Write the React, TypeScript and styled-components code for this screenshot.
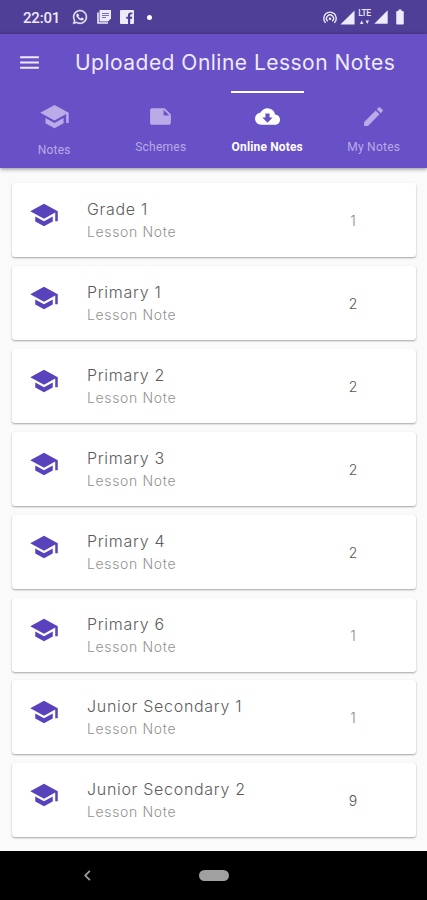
import React from 'react';
import styled, { createGlobalStyle } from 'styled-components';
import {
  MdSchool, MdNote, MdCloudDownload, MdEdit, MdMenu,
  MdSignalCellular4Bar, MdBatteryFull, MdChevronLeft,
} from 'react-icons/md';
import { FaWhatsapp } from 'react-icons/fa';

const GlobalStyle = createGlobalStyle`
  * { box-sizing: border-box; }
  body { margin: 0; background: #fafafa; }
`;

const Screen = styled.div`
  display: flex;
  flex-direction: column;
  width: 427px;
  height: 900px;
  overflow: hidden;
  background: #fafafa;
  font-family: Inter, 'Liberation Sans', sans-serif;
`;

const StatusBar = styled.div`
  flex: none;
  display: flex;
  align-items: center;
  justify-content: space-between;
  height: 34px;
  padding: 0 18px 0 23px;
  background: #4f3f97;
  color: #eeeafa;
`;

const StatusGroup = styled.div<{ $gap: number }>`
  display: flex;
  align-items: center;
  gap: ${(p) => p.$gap}px;
  svg { display: block; }
`;

const Clock = styled.span`
  width: 37px;
  margin: 2px 3px 0 0;
  font: 500 15px/18px Roboto, sans-serif;
  letter-spacing: -0.2px;
  white-space: nowrap;
`;

const Dot = styled.span`
  width: 5px;
  height: 5px;
  margin-left: 4px;
  border-radius: 50%;
  background: #fff;
`;

const Lte = styled.span`
  display: flex;
  flex-direction: column;
  align-items: center;
  width: 13px;
  height: 17px;
  gap: 2px;
  font: 500 8.5px/9px Roboto, sans-serif;
  letter-spacing: -0.4px;
`;

const Header = styled.header`
  flex: none;
  height: 134px;
  background: #6850c6;
  box-shadow: 0 1px 4px rgba(0, 0, 0, 0.45);
`;

const AppBar = styled.div`
  display: flex;
  align-items: center;
  height: 57px;
  padding-left: 17px;
  color: #eeeafb;
`;

const Title = styled.h1`
  margin: 0 0 0 33px;
  font-size: 21px;
  font-weight: 400;
  line-height: 26px;
  letter-spacing: 0.48px;
  white-space: nowrap;
`;

const Tabs = styled.nav`
  display: grid;
  grid-template-columns: repeat(4, 1fr);
  height: 77px;
  padding-left: 1px;
`;

const Tab = styled.div<{ $active?: boolean; $drop?: boolean }>`
  display: flex;
  flex-direction: column;
  align-items: center;
  justify-self: center;
  width: ${(p) => (p.$active ? '73px' : '80px')};
  padding-top: ${(p) => (p.$drop ? 8 : 11)}px;
  border-top: 2px solid ${(p) => (p.$active ? '#fff' : 'transparent')};
  color: ${(p) => (p.$active ? '#fff' : '#b9abe7')};
  svg { display: block; }
`;

const TabLabel = styled.span<{ $strong?: boolean; $gap: number }>`
  margin-top: ${(p) => p.$gap}px;
  font: ${(p) => (p.$strong ? 700 : 400)} 12px/14px Roboto, sans-serif;
  letter-spacing: ${(p) => (p.$strong ? '0.15px' : '0.25px')};
  white-space: nowrap;
`;

const List = styled.main`
  flex: none;
  display: flex;
  flex-direction: column;
  gap: 8.86px;
  height: 683px;
  padding: 15.3px 11px 0 12px;
`;

const Card = styled.article`
  flex: none;
  display: flex;
  height: 74px;
  padding-left: 17px;
  border-radius: 3px;
  background: #fff;
  box-shadow: 0 1px 2px rgba(0, 0, 0, 0.35);
`;

const CapIcon = styled(MdSchool)`
  flex: none;
  margin-top: 17px;
  color: #5a42bc;
`;

const CardText = styled.div`
  width: 253px;
  margin: 15px 0 0 28px;
  white-space: nowrap;
`;

const Name = styled.div`
  color: #5c5c5c;
  font-size: 16px;
  font-weight: 300;
  line-height: 22px;
  letter-spacing: 0.7px;
`;

const Sub = styled.div`
  color: #929292;
  font-size: 14px;
  font-weight: 300;
  line-height: 23px;
  letter-spacing: 0.65px;
`;

const Count = styled.span<{ $light: boolean }>`
  width: 26px;
  margin-top: 28px;
  color: ${(p) => (p.$light ? '#8a8a8a' : '#555')};
  font-size: 14px;
  font-weight: 300;
  line-height: 20px;
  text-align: center;
`;

const NavBar = styled.footer`
  flex: none;
  display: flex;
  align-items: center;
  height: 49px;
  padding-left: 77px;
  background: #000;
  color: #a0a0a0;
`;

const HomePill = styled.span`
  width: 30px;
  height: 11px;
  margin-left: 101px;
  border-radius: 6px;
  background: #a0a0a0;
`;

const ArticleIcon = () => (
  <svg width="14" height="14" viewBox="0 0 14 14">
    <path fill="none" stroke="currentColor" strokeWidth="1.6" d="M1 2.500v10.500h10" />
    <path fill="currentColor" d="M2.500 0H14v8.500L11 11.500H2.500z" />
    <path stroke="#7c6fb4" d="M5 3.500h7M5 5.500h7M5 7.500h4" />
  </svg>
);

const FacebookIcon = () => (
  <svg width="14" height="14" viewBox="0 0 14 14">
    <path
      fill="currentColor"
      d="M1 0h12a1 1 0 0 1 1 1v12a1 1 0 0 1-1 1h-2.8V8.8H12l.3-2.1h-2.1V5.4c0-.7.3-1.1 1.1-1.1h1.1V2.4h-1.6C8.900 2.400 8 3.400 8 5v1.700H6.300v2.100H8V14H1a1 1 0 0 1-1-1V1a1 1 0 0 1 1-1z"
    />
  </svg>
);

const HotspotIcon = () => (
  <svg width="14" height="13" viewBox="0 0 14 13" fill="none" stroke="currentColor" strokeWidth="1.400" strokeLinecap="round">
    <path d="M2.300 11.400A6.200 6.200 0 1 1 11.700 11.400M4.400 9.800A3.500 3.500 0 1 1 9.600 9.800" />
    <circle cx="7" cy="7.700" r="1.300" fill="currentColor" stroke="none" />
  </svg>
);

const DataArrows = () => (
  <svg width="9" height="4" viewBox="0 0 9 4">
    <path fill="currentColor" d="M0 4l1.700-3.500L3.400 4zM5.600.5H9L7.300 4z" />
  </svg>
);

const grades: [string, number][] = [
  ['Grade 1', 1],
  ['Primary 1', 2],
  ['Primary 2', 2],
  ['Primary 3', 2],
  ['Primary 4', 2],
  ['Primary 6', 1],
  ['Junior Secondary 1', 1],
  ['Junior Secondary 2', 9],
];

export default function App() {
  return (
    <Screen>
      <GlobalStyle />
      <StatusBar>
        <StatusGroup $gap={9}>
          <Clock>22:01</Clock>
          <FaWhatsapp size={16} stroke="currentColor" strokeWidth={12} />
          <ArticleIcon />
          <FacebookIcon />
          <Dot />
        </StatusGroup>
        <StatusGroup $gap={2}>
          <HotspotIcon />
          <MdSignalCellular4Bar size={17} />
          <Lte>LTE<DataArrows /></Lte>
          <MdSignalCellular4Bar size={16} />
          <MdBatteryFull size={18} />
        </StatusGroup>
      </StatusBar>
      <Header>
        <AppBar>
          <MdMenu size={25} />
          <Title>Uploaded Online Lesson Notes</Title>
        </AppBar>
        <Tabs>
          <Tab $drop>
            <MdSchool size={31} />
            <TabLabel $gap={11}>Notes</TabLabel>
          </Tab>
          <Tab>
            <MdNote size={25} />
            <TabLabel $gap={11}>Schemes</TabLabel>
          </Tab>
          <Tab $active>
            <MdCloudDownload size={25} />
            <TabLabel $gap={11} $strong>Online Notes</TabLabel>
          </Tab>
          <Tab>
            <MdEdit size={25} />
            <TabLabel $gap={11}>My Notes</TabLabel>
          </Tab>
        </Tabs>
      </Header>
      <List>
        {grades.map(([name, count]) => (
          <Card key={name}>
            <CapIcon size={30} />
            <CardText>
              <Name>{name}</Name>
              <Sub>Lesson Note</Sub>
            </CardText>
            <Count $light={count === 1}>{count}</Count>
          </Card>
        ))}
      </List>
      <NavBar>
        <MdChevronLeft size={21} />
        <HomePill />
      </NavBar>
    </Screen>
  );
}
